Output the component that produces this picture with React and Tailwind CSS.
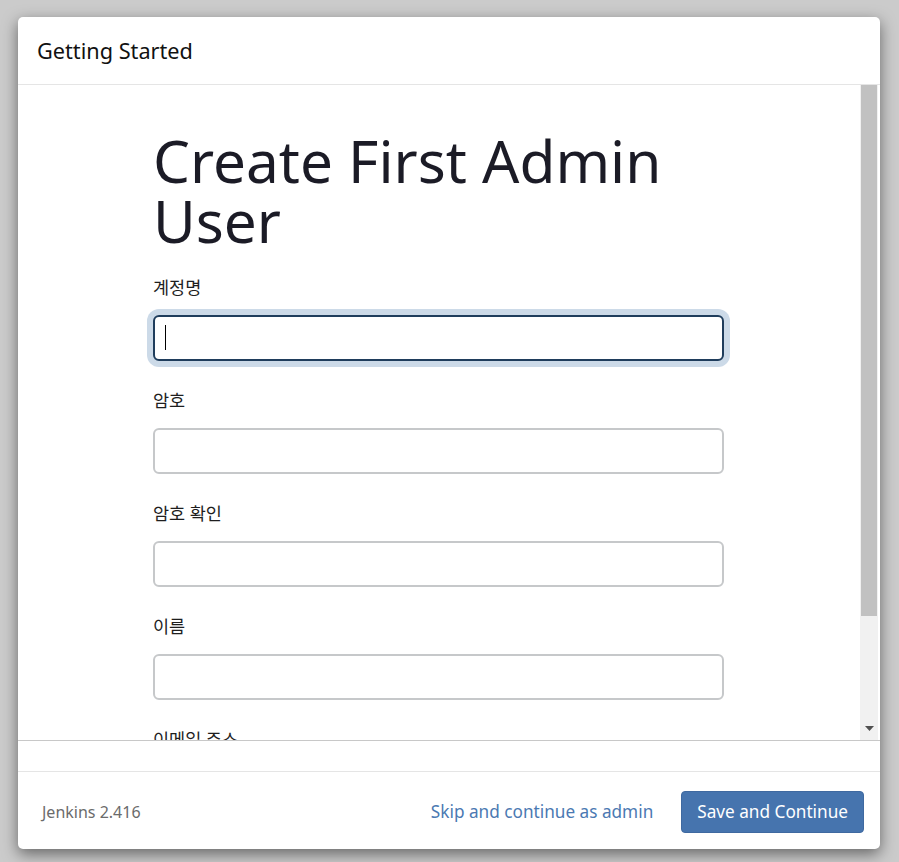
const fields = [
  { label: "계정명", focused: true },
  { label: "암호" },
  { label: "암호 확인" },
  { label: "이름" },
  { label: "이메일 주소" },
];

function Field({ label, focused }) {
  return (
    <div className="mb-[27px]">
      <label className="block h-[25px] leading-[25px] mb-[15px] text-[17.5px] text-[#1e1e1e]">{label}</label>
      {focused ? (
        <div className="relative h-[46px] rounded-[6px] border-2 border-[#1f3d5c] bg-white shadow-[0_0_0_6px_#ccdae8]">
          <span className="absolute left-[10px] top-[8px] h-[25px] w-px bg-black" />
        </div>
      ) : (
        <input type="text" className="block w-full h-[46px] rounded-[6px] border-2 border-[#c6c8ca] bg-white outline-none" />
      )}
    </div>
  );
}

function App() {
  return (
    <div className="w-[899px] h-[862px] bg-[#cbcbcb] pt-[17px] pl-[18px]" style={{ fontFamily: "'Noto Sans', 'Noto Sans CJK KR', sans-serif" }}>
      <div className="w-[862px] h-[832px] bg-white rounded-[5px] shadow-[0_5px_15px_rgba(0,0,0,0.5)] flex flex-col overflow-hidden">
        <div className="h-[68px] shrink-0 border-b border-[#e5e5e5] flex items-center pl-[19px] pt-[2px]">
          <h4 className="text-[21.7px] text-[#111]">Getting Started</h4>
        </div>

        <div className="h-[656px] shrink-0 flex border-b border-[#c8c8c8]">
          <div className="flex-1 overflow-hidden pl-[135px] pt-[45px]">
            <div className="w-[571px]">
              <h1 className="text-[58.5px] leading-[60px] text-[#1b1b26] mb-[25px]">Create First Admin User</h1>
              {fields.map((f) => (
                <Field key={f.label} {...f} />
              ))}
            </div>
          </div>
          <div className="w-[18px] bg-[#f1f1f1] flex flex-col">
            <div className="h-[531px] mx-[1px] bg-[#c1c1c1]" />
            <div className="flex-1" />
            <div className="h-[24px] flex items-center justify-center">
              <svg width="9" height="5" viewBox="0 0 9 5"><path d="M0 0h9L4.5 5z" fill="#505050" /></svg>
            </div>
          </div>
          <div className="w-[2px]" />
        </div>

        <div className="h-[31px] shrink-0 border-b border-[#e5e5e5]" />

        <div className="flex-1 flex items-center justify-between pl-[24px] pr-[16px] pt-[2px]">
          <span className="text-[16px] text-[#6b6b6b]">Jenkins 2.416</span>
          <div className="flex items-center gap-[28px]">
            <a className="text-[17.2px] text-[#4b79b2] cursor-pointer">Skip and continue as admin</a>
            <button className="h-[42px] px-[15px] rounded-[4px] bg-[#4674ae] border border-[#3f69a0] text-white text-[17.2px]">Save and Continue</button>
          </div>
        </div>
      </div>
    </div>
  );
}

export default App;
